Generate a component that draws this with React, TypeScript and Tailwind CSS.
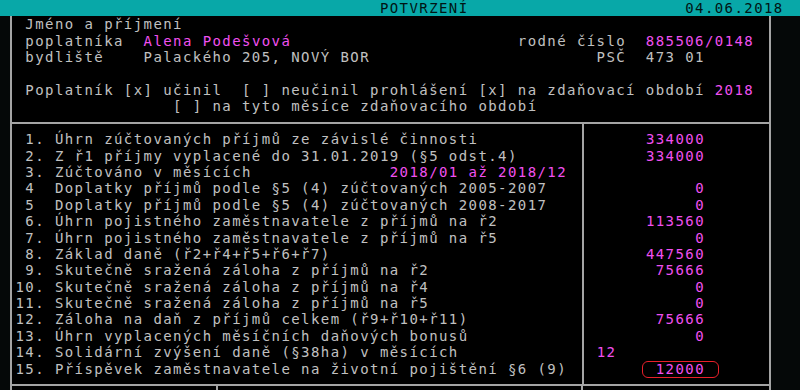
import React from "react";

const M = "text-[#f050f0]";

function Line({ children }: { children?: React.ReactNode }) {
  return <div className="h-[16.4px] leading-[16.4px] whitespace-pre">{children ?? " "}</div>;
}

type Row = { label: React.ReactNode; value: React.ReactNode };

const rows: Row[] = [
  { label: " 1. Úhrn zúčtovaných příjmů ze závislé činnosti", value: "334000".padStart(12) },
  { label: " 2. Z ř1 příjmy vyplacené do 31.01.2019 (§5 odst.4)", value: "334000".padStart(12) },
  {
    label: (
      <>
        {" 3. Zúčtováno v měsících" + " ".repeat(14)}
        <span className={M}>2018/01 až 2018/12</span>
      </>
    ),
    value: "",
  },
  { label: " 4  Doplatky příjmů podle §5 (4) zúčtovaných 2005-2007", value: "0".padStart(12) },
  { label: " 5  Doplatky příjmů podle §5 (4) zúčtovaných 2008-2017", value: "0".padStart(12) },
  { label: " 6. Úhrn pojistného zaměstnavatele z příjmů na ř2", value: "113560".padStart(12) },
  { label: " 7. Úhrn pojistného zaměstnavatele z příjmů na ř5", value: "0".padStart(12) },
  { label: " 8. Základ daně (ř2+ř4+ř5+ř6+ř7)", value: "447560".padStart(12) },
  { label: " 9. Skutečně sražená záloha z příjmů na ř2", value: "75666".padStart(12) },
  { label: "10. Skutečně sražená záloha z příjmů na ř4", value: "0".padStart(12) },
  { label: "11. Skutečně sražená záloha z příjmů na ř5", value: "0".padStart(12) },
  { label: "12. Záloha na daň z příjmů celkem (ř9+ř10+ř11)", value: "75666".padStart(12) },
  { label: "13. Úhrn vyplacených měsíčních daňových bonusů", value: "0".padStart(12) },
  { label: "14. Solidární zvýšení daně (§38ha) v měsících", value: " 12" },
  {
    label: "15. Příspěvek zaměstnavatele na životní pojištění §6 (9)",
    value: (
      <>
        {" ".repeat(7)}
        <span className="relative inline-block">
          12000
          <span className="absolute -left-[14px] -right-[14px] top-[0.5px] -bottom-[0.5px] border-[1.5px] border-[#e8202a] rounded-[6px]" />
        </span>
      </>
    ),
  },
];

export default function App() {
  return (
    <div className="w-[800px] h-[390px] overflow-hidden bg-[#050808] text-[#c0c0c0] font-['DejaVu_Sans_Mono',monospace] text-[14px] tracking-[1.42px]">
      {/* title bar */}
      <div className="h-[16.4px] bg-[#08a8a8] text-[#001414] pl-[15.5px]">
        <Line>{" ".repeat(37) + "POTVRZENÍ" + " ".repeat(22) + "04.06.2018"}</Line>
      </div>

      {/* body box */}
      <div className="ml-[10px] w-[761px] border-x-2 border-[#a4a4a4] bg-black">
        {/* header */}
        <div className="h-[106.1px] pl-[3.5px]">
          <Line>{" Jméno a příjmení"}</Line>
          <Line>
            {" poplatníka  "}
            <span className={M}>Alena Podešvová</span>
            {" ".repeat(23) + "rodné číslo  "}
            <span className={M}>885506/0148</span>
          </Line>
          <Line>{" bydliště    Palackého 205, NOVÝ BOR" + " ".repeat(23) + "PSČ  473 01"}</Line>
          <Line />
          <Line>
            {" Poplatník [x] učinil  [ ] neučinil prohlášení [x] na zdaňovací období "}
            <span className={M}>2018</span>
          </Line>
          <Line>{" ".repeat(16) + "[ ] na tyto měsíce zdaňovacího období"}</Line>
        </div>

        {/* table */}
        <div className="flex border-y-2 border-[#a4a4a4]">
          <div className="w-[571.5px] border-r-2 border-[#a4a4a4] pl-[3.5px] pt-[6.7px] pb-[7.2px]">
            {rows.map((r, i) => (
              <Line key={i}>{r.label}</Line>
            ))}
          </div>
          <div className={"flex-1 pl-[3.3px] pt-[6.7px] pb-[7.2px] " + M}>
            {rows.map((r, i) => (
              <Line key={i}>{r.value}</Line>
            ))}
          </div>
        </div>

        {/* next section (cut off) */}
        <div className="flex h-[12px]">
          <div className="w-[206.4px] border-r-2 border-[#a4a4a4]" />
          <div className="w-[365.1px] border-r-2 border-[#a4a4a4]" />
          <div className="flex-1" />
        </div>
      </div>
    </div>
  );
}
